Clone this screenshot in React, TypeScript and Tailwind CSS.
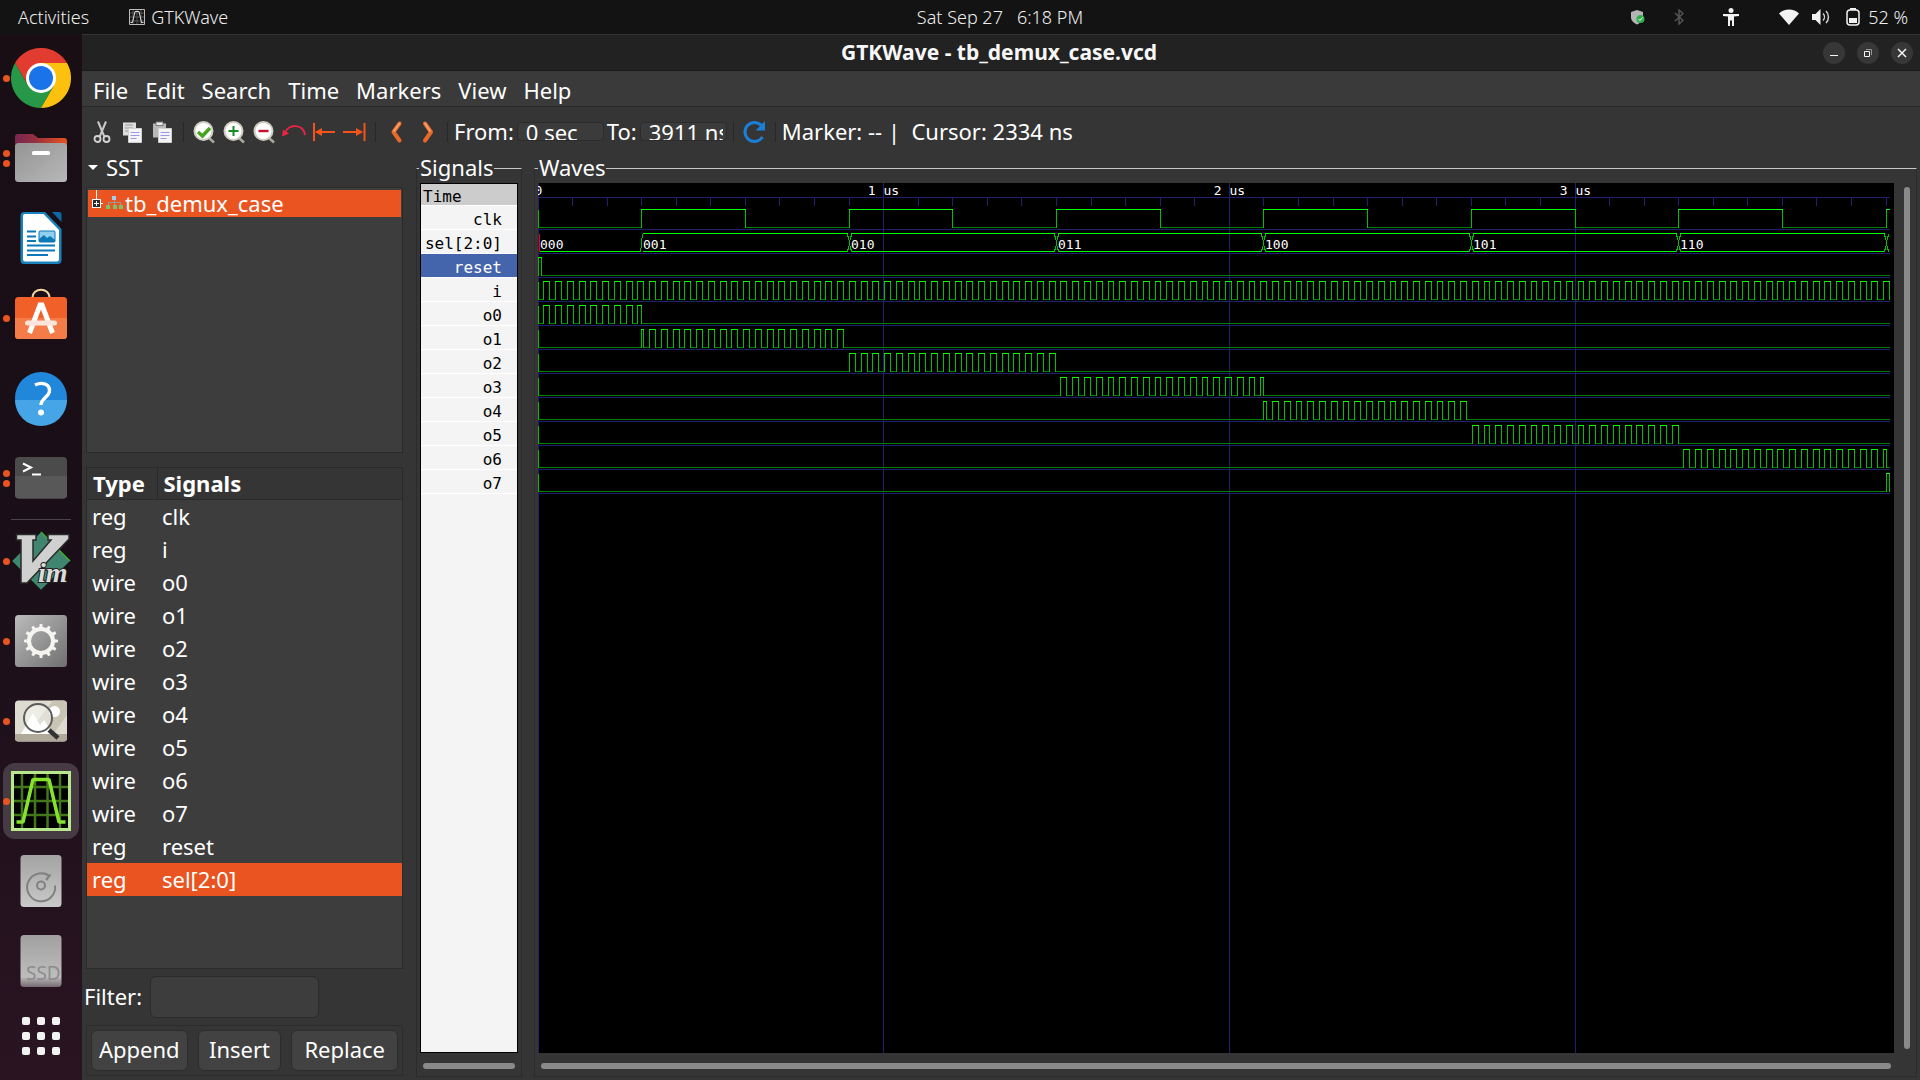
import type { ReactNode } from "react";

/* ---------- simulation data ---------- */

const PX_PER_NS = 0.34567;
const END = 3911;
const ROW = 24;
const xAt = (t: number) => Math.floor(t * PX_PER_NS) + 0.5;

type Pulse = [number, number];

const clk: Pulse[] = [];
for (let t = 300; t < END; t += 600) clk.push([t, Math.min(t + 300, END)]);

const input: Pulse[] = [];
for (let t = 17; t < END; t += 34) input.push([t, Math.min(t + 17, END)]);

const within = (from: number, to: number): Pulse[] =>
  input
    .map(([a, b]): Pulse => [Math.max(a, from), Math.min(b, to)])
    .filter(([a, b]) => b > a);

const bus = [
  { from: 0, to: 300, value: "000" },
  { from: 300, to: 900, value: "001" },
  { from: 900, to: 1500, value: "010" },
  { from: 1500, to: 2100, value: "011" },
  { from: 2100, to: 2700, value: "100" },
  { from: 2700, to: 3300, value: "101" },
  { from: 3300, to: 3900, value: "110" },
  { from: 3900, to: 3911, value: "" },
];

const traces: { name: string; pulses: Pulse[] | null }[] = [
  { name: "clk", pulses: clk },
  { name: "sel[2:0]", pulses: null },
  { name: "reset", pulses: [[0, 10]] },
  { name: "i", pulses: input },
  ...bus.map((b, n) => ({ name: "o" + n, pulses: within(b.from, b.to) })),
];

const variables = [
  ["reg", "clk"],
  ["reg", "i"],
  ["wire", "o0"],
  ["wire", "o1"],
  ["wire", "o2"],
  ["wire", "o3"],
  ["wire", "o4"],
  ["wire", "o5"],
  ["wire", "o6"],
  ["wire", "o7"],
  ["reg", "reset"],
  ["reg", "sel[2:0]"],
];

/* ---------- wave canvas ---------- */

function Trace({ pulses, row }: { pulses: Pulse[]; row: number }) {
  const hi = 26.5 + row * ROW;
  const lo = hi + 18;
  let high = "";
  let low = "";
  let edge = `M0.5 ${hi}V${lo}`;
  let last = 0;
  for (const [a, b] of pulses) {
    const xa = xAt(a);
    const xb = xAt(b);
    if (a > last) low += `M${xAt(last)} ${lo}H${xa}`;
    edge += `M${xa} ${hi}V${lo}`;
    if (b < END) edge += `M${xb} ${hi}V${lo}`;
    high += `M${xa - 0.5} ${hi}H${xb + 0.5}`;
    last = b;
  }
  if (last < END) low += `M${xAt(last)} ${lo}H${xAt(END) + 0.5}`;
  return (
    <g fill="none">
      <path d={low} stroke="#008000" />
      <path d={edge} stroke="#00c000" />
      <path d={high} stroke="#00ff00" />
    </g>
  );
}

function Bus({ row }: { row: number }) {
  const hi = 26.5 + row * ROW;
  const lo = hi + 18;
  return (
    <g fill="none">
      {bus.map((b, n) => {
        const a = xAt(b.from);
        const z = xAt(b.to);
        const start = n === 0 ? a : a + 1.5;
        const end = n === bus.length - 1 ? z - 2 : z - 1.5;
        return (
          <g key={n}>
            <path
              d={`M${start} ${lo}H${end}` + (n ? `M${start} ${hi}H${end}` : "")}
              stroke="#00ff00"
            />
            {n === 1 && <path d={`M${a - 1} ${lo}V${lo - 4}M${a} ${lo - 4}V${hi + 4}M${a + 1} ${hi + 4}V${hi}`} stroke="#00c000" />}
            {n > 1 && (
              <path
                d={`M${a - 2} ${hi}v3M${a - 1} ${hi + 2}v4M${a} ${hi + 6}v6M${a - 1} ${lo - 6}v4M${a - 2} ${lo - 3}v3M${a + 2} ${hi}v3M${a + 1} ${hi + 2}v4M${a + 1} ${lo - 6}v4M${a + 2} ${lo - 3}v3`}
                stroke="#00c000"
              />
            )}
            <text x={Math.floor(a) + 2} y={lo - 3} fill="#fff" fontSize="13">
              {b.value}
            </text>
          </g>
        );
      })}
      <path d={`M1.5 ${hi}V${lo}`} stroke="#ff0000" />
    </g>
  );
}

function WaveCanvas() {
  const ticks = Array.from({ length: 39 }, (_, n) => (n + 1) * 100);
  const width = xAt(END) + 0.5;
  return (
    <svg
      className="h-full w-full bg-black font-['DejaVu_Sans_Mono',monospace]"
      shapeRendering="crispEdges"
      role="img"
      aria-label="Waveforms"
    >
      <g stroke="#20206f">
        <path d={`M0 14.5H${width}` + ticks.map((t) => `M${xAt(t)} 14V23`).join("")} />
        <path d={traces.map((_, n) => `M0 ${46.5 + n * ROW}H${width}`).join("")} />
        {[0, 1000, 2000, 3000].map((t) => (
          <line key={t} x1={xAt(t)} x2={xAt(t)} y1="0" y2="100%" />
        ))}
      </g>
      {["0", "1 us", "2 us", "3 us"].map((label, n) => (
        <text key={label} x={xAt(n * 1000)} y="12" fill="#fff" fontSize="13" textAnchor="middle">
          {label}
        </text>
      ))}
      {traces.map((t, n) =>
        t.pulses ? <Trace key={t.name} pulses={t.pulses} row={n} /> : <Bus key={t.name} row={n} />,
      )}
    </svg>
  );
}

/* ---------- dock ---------- */

function DockIcon({ children }: { children: ReactNode }) {
  return (
    <svg className="size-[60px]" viewBox="-30 -30 60 60">
      {children}
    </svg>
  );
}

const gear = Array.from({ length: 12 }, (_, n) => n * 30);

const dockItems: { name: string; dots: number; active?: boolean; icon: ReactNode }[] = [
  {
    name: "Google Chrome",
    dots: 1,
    icon: (
      <>
        <path d="M-26-15A30 30 0 0 1 26-15H0L-13 7.5Z" fill="#e23b30" />
        <path d="M-26-15A30 30 0 0 0 0 30L13 7.5H-13Z" fill="#279847" />
        <path d="M0-15H26A30 30 0 0 1 0 30L13 7.5Z" fill="#fcc00f" />
        <circle r="15" fill="#fff" />
        <circle r="12" fill="#1a73e8" />
      </>
    ),
  },
  {
    name: "Files",
    dots: 2,
    icon: (
      <>
        <defs>
          <linearGradient id="folder" x1="0" x2="1">
            <stop offset="0" stopColor="#77264f" />
            <stop offset=".4" stopColor="#96303f" />
            <stop offset="1" stopColor="#e95420" />
          </linearGradient>
          <linearGradient id="metal" x1="0" y1="0" x2="1" y2="1">
            <stop offset="0" stopColor="#949494" />
            <stop offset="1" stopColor="#b8b8b8" />
          </linearGradient>
        </defs>
        <path d="M-26-21q0-3 3-3H-8l5 4H23q3 0 3 3V0H-26Z" fill="url(#folder)" />
        <rect x="-26" y="-15" width="52" height="39" rx="3.5" fill="url(#metal)" />
        <rect x="-9" y="-7" width="18" height="4" rx="1.5" fill="#fff" />
      </>
    ),
  },
  {
    name: "LibreOffice Writer",
    dots: 0,
    icon: (
      <>
        <path d="M-17-26H4L20.500-9V22q0 4-4 4H-17q-3.500 0-3.500-4V-22q0-4 3.500-4Z" fill="#1a83bd" />
        <path d="M-16-24H2.500L18-8V21q0 2.500-2.500 2.500H-16q-2 0-2-2V-22q0-2 2-2Z" fill="#fff" />
        <path d="M11-26H18q2.500 0 2.500 2.500V-16Z" fill="#0b6aa5" />
        <path d="M-14-6.500h9M-14-1.500h9M-14 3h9M-14 7.500H14M-14 12.500H14M-14 17H7" stroke="#0b78b8" strokeWidth="2.200" />
        <rect x="-2" y="-7" width="16" height="11" rx="1" fill="#8fd0ef" stroke="#0b78b8" />
        <path d="M-2 4V1L3-3 6 0 9-2 14 2V4Z" fill="#0b78b8" />
      </>
    ),
  },
  {
    name: "Ubuntu Software",
    dots: 1,
    icon: (
      <>
        <path d="M-8.500-20C-8.500-31 8.500-31 8.500-20" fill="none" stroke="#f3d3a4" strokeWidth="2" />
        <rect x="-26" y="-21" width="52" height="42" rx="3.500" fill="#f2602a" />
        <path d="M-26 0H26V17.500q0 3.500-3.500 3.500H-22.500q-3.500 0-3.500-3.500Z" fill="#f47c48" />
        <path d="M-11.500 15L-1-13H1L11.500 15" fill="none" stroke="#fff" strokeWidth="5" />
        <path d="M-13.500 5H13.500" stroke="#fde4da" strokeWidth="5" strokeLinecap="round" />
      </>
    ),
  },
  {
    name: "Help",
    dots: 0,
    icon: (
      <>
        <circle r="26" fill="#2187db" />
        <path d="M-26 2A26 26 0 0 0 26 2Z" fill="#45a5e6" />
        <path d="M-6-13C0-16 8.500-15 8.500-7.500C8.500-1 0 0 0 7" fill="none" stroke="#fff" strokeWidth="3.400" />
        <circle cy="14.500" r="3" fill="#fff" />
      </>
    ),
  },
  {
    name: "Terminal",
    dots: 2,
    icon: (
      <>
        <rect x="-26" y="-21" width="52" height="41.500" rx="4" fill="#4b4b4b" />
        <path d="M-26-2H26V16.500q0 4-4 4H-22q-4 0-4-4Z" fill="#585858" />
        <path d="M-18-14.500l8 4-8 4" fill="none" stroke="#fff" strokeWidth="2" />
        <path d="M-9-3.500H0" stroke="#fff" strokeWidth="2" />
      </>
    ),
  },
  {
    name: "Vim",
    dots: 1,
    icon: (
      <>
        <path d="M0-29L29 0 0 29-29 0Z" fill="#3f8570" stroke="#1d3b2c" />
        <path d="M0-29L29 0" stroke="#3fae2a" strokeWidth="1.500" />
        <path
          d="M-24.500-26.500H-5V-21H-8V0L10-21H7V-26.500H28V-22L-14 22H-20V-21H-24.500Z"
          fill="#d0d0d0"
          stroke="#2a2a2a"
          strokeWidth="1.500"
        />
        <text
          x="-3"
          y="21"
          fill="#dcdcdc"
          stroke="#222"
          strokeWidth="2"
          paintOrder="stroke"
          className="font-['Liberation_Serif',serif] text-[28px] font-bold italic"
        >
          im
        </text>
      </>
    ),
  },
  {
    name: "Settings",
    dots: 1,
    icon: (
      <>
        <defs>
          <linearGradient id="panel" x1="0" y1="0" x2="1" y2="1">
            <stop offset="0" stopColor="#bcbcbc" />
            <stop offset="1" stopColor="#6f6f6f" />
          </linearGradient>
        </defs>
        <rect x="-26" y="-26" width="52" height="52" rx="3.500" fill="url(#panel)" />
        {gear.map((angle) => (
          <path key={angle} d="M-2-12L-1.300-17H1.300L2-12Z" fill="#f5f4f0" transform={`rotate(${angle})`} />
        ))}
        <circle r="12" fill="none" stroke="#f5f4f0" strokeWidth="4" />
      </>
    ),
  },
  {
    name: "Image Viewer",
    dots: 1,
    icon: (
      <>
        <rect x="-26" y="-20.500" width="52" height="41" rx="3.500" fill="#dedcd0" />
        <path d="M12-20.500H22q4 0 4 4V-6L12 13.500H-14Z" fill="#c8c5b4" />
        <path d="M-26 13H26V17q0 3.500-3.500 3.500H-22.500q-3.500 0-3.500-3.500Z" fill="#b0a999" />
        <circle cx="13.500" cy="-9.500" r="5.500" fill="#fff" />
        <path d="M-20 13L-8-8-1 4 3-1 12 13Z" fill="#fff" />
        <circle cx="-3" cy="-3" r="14" fill="#fff" fillOpacity=".45" stroke="#5c5c5c" strokeWidth="2" />
        <path d="M8 9L17 17" stroke="#333" strokeWidth="4.500" />
      </>
    ),
  },
  {
    name: "GTKWave",
    dots: 1,
    active: true,
    icon: (
      <>
        <rect x="-28.500" y="-28.500" width="57" height="57" stroke="#b9e78c" strokeWidth="3" />
        <path d="M-19-27V27M-6-27V27M6.500-27V27M19-27V27M-27-14H27M-27 0H27M-27 14H27" stroke="#44761c" strokeWidth="2.500" />
        <path d="M-24.500 21H-18L-8-21.500H8L18 21H24.500" fill="none" stroke="#86e22f" strokeWidth="3.500" strokeLinejoin="bevel" />
      </>
    ),
  },
  {
    name: "Disk",
    dots: 0,
    icon: (
      <>
        <defs>
          <linearGradient id="disk" x2="0" y2="1">
            <stop offset="0" stopColor="#a3a3a3" />
            <stop offset="1" stopColor="#c9c9c9" />
          </linearGradient>
        </defs>
        <rect x="-20.500" y="-26" width="41" height="52" rx="3.500" fill="url(#disk)" />
        <path d="M9-7.500A14 14 0 1 0 14 1.500M9.500-9.500L5-4" fill="none" stroke="#808080" strokeWidth="2" transform="translate(0 3)" />
        <circle cy="4.500" r="4" fill="none" stroke="#808080" strokeWidth="2" />
      </>
    ),
  },
  {
    name: "SSD",
    dots: 0,
    icon: (
      <>
        <defs>
          <linearGradient id="ssd" x2="0" y2="1">
            <stop offset="0" stopColor="#a0a0a0" />
            <stop offset=".8" stopColor="#bdbdbd" />
            <stop offset="1" stopColor="#766a72" />
          </linearGradient>
        </defs>
        <rect x="-20.500" y="-26" width="41" height="52" rx="3.500" fill="url(#ssd)" />
        <text x="-15" y="19" fill="#8c8c8c" className="font-['Noto_Sans',sans-serif] text-[19px]">
          SSD
        </text>
      </>
    ),
  },
];

function Dock() {
  return (
    <nav className="flex w-[82px] shrink-0 flex-col bg-gradient-to-b from-[#1a0e15] via-[#1a0f18] to-[#2a1422] pt-1">
      {dockItems.map((item, n) => (
        <div key={item.name}>
          {n === 6 && <hr className="mx-[11px] mt-px mb-px border-[#4a434a]" />}
          <button
            type="button"
            aria-label={item.name}
            className="relative flex h-20 w-full items-center justify-center"
          >
            <span
              className={
                item.active
                  ? "flex size-[76px] items-center justify-center rounded-xl bg-[#463b43]"
                  : "flex size-[76px] items-center justify-center"
              }
            >
              <DockIcon>{item.icon}</DockIcon>
            </span>
            <span className="absolute inset-y-0 left-[3px] flex flex-col items-center justify-center gap-[3px]">
              {Array.from({ length: item.dots }, (_, d) => (
                <span key={d} className="size-[7px] rounded-full bg-[#e95420]" />
              ))}
            </span>
          </button>
        </div>
      ))}
      <button type="button" aria-label="Show Applications" className="mx-auto mt-4 grid grid-cols-3 gap-[7px]">
        {gear.slice(0, 9).map((k) => (
          <span key={k} className="size-2 rounded-[2px] bg-[#f2f2f2]" />
        ))}
      </button>
    </nav>
  );
}

/* ---------- system bar ---------- */

function TopBar() {
  return (
    <header className="relative flex h-[34px] shrink-0 items-center bg-[#131313] pr-3 pl-[18px] text-lg font-light text-[#eeeeee]">
      <button type="button">Activities</button>
      <button type="button" className="ml-10 flex items-center gap-1.5">
        <svg className="size-4" viewBox="0 0 16 16" fill="none">
          <path d="M.5.500h15v15H.5Z" stroke="#bbb" />
          <path d="M4 1v14M8 1v14M12 1v14M1 4h14M1 8h14M1 12h14" stroke="#555" />
          <path d="M1.500 13.500H3.500L6 2.500h4L12.500 13.500h2" stroke="#ddd" />
        </svg>
        GTKWave
      </button>
      <button type="button" className="absolute left-1/2 flex -translate-x-1/2 gap-3.5 pl-20 pr-0 whitespace-nowrap">
        <span>Sat Sep 27</span>
        <span>6:18 PM</span>
      </button>
      <div className="ml-auto flex items-center">
        <svg className="mr-[28px] size-4" viewBox="0 0 16 16">
          <path d="M7 1L13 3V8c0 4-3 6-6 7.500C4 14 1 12 1 8V3Z" fill="#b5b5b5" />
          <circle cx="10.500" cy="10" r="4" fill="#2fae4a" />
          <path d="M8.500 10l1.500 1.500 2.500-3" fill="none" stroke="#fff" />
        </svg>
        <svg className="mr-[39px] h-4 w-2.5" viewBox="0 0 10 16" fill="none" stroke="#555" strokeWidth="1.500">
          <path d="M1 4L9 11.500 5 15V1L9 4.500 1 12" />
        </svg>
        <svg className="mr-10 h-[18px] w-4" viewBox="0 0 16 18" fill="#f2f2f2">
          <circle cx="8" cy="2.500" r="2.500" />
          <path d="M0 6H16V8L11 8.500V18H9V12.500H7V18H5V8.500L0 8Z" />
        </svg>
        <svg className="mr-[13px] h-4 w-5" viewBox="0 0 20 16" fill="#f2f2f2">
          <path d="M0 4.500C5-1 15-1 20 4.500L10 16Z" />
        </svg>
        <svg className="mr-4 h-4 w-[18px]" viewBox="0 0 18 16" fill="#f2f2f2">
          <path d="M0 5H3.500L8.500 0V16L3.500 11H0Z" />
          <path d="M11 4.500a5 5 0 0 1 0 7M14 2a8.500 8.500 0 0 1 0 12" fill="none" stroke="#d0d0d0" strokeWidth="1.500" />
        </svg>
        <svg className="mr-2 h-[18px] w-3.5" viewBox="0 0 14 18">
          <rect x="1" y="2" width="12" height="15" rx="3" fill="none" stroke="#f2f2f2" strokeWidth="1.500" />
          <path d="M4 0h6v2H4ZM3 10h8v5H3Z" fill="#f2f2f2" />
        </svg>
        <span>52 %</span>
      </div>
    </header>
  );
}

function WindowButton({ label, children }: { label: string; children: ReactNode }) {
  return (
    <button type="button" aria-label={label} className="flex size-[22px] items-center justify-center rounded-full bg-[#373737]">
      <svg className="size-3" viewBox="0 0 12 12" fill="none" stroke="#f5f5f5">
        {children}
      </svg>
    </button>
  );
}

/* ---------- toolbar ---------- */

function Tool({ label, children }: { label: string; children: ReactNode }) {
  return (
    <button type="button" aria-label={label} className="flex w-[30px] shrink-0 justify-center">
      <svg className="size-6" viewBox="0 0 24 24" fill="none">
        {children}
      </svg>
    </button>
  );
}

const Divider = () => <span className="mr-[5px] ml-1.5 h-5 w-px shrink-0 bg-[#282828]" />;

function Lens({ children }: { children: ReactNode }) {
  return (
    <>
      <path d="M17 18L22 22.500" stroke="#a9a99a" strokeWidth="2.500" />
      <circle cx="11.500" cy="11" r="9" fill="#fff" stroke="#cfcdc2" strokeWidth="2" />
      {children}
    </>
  );
}

const Page = ({ x, y }: { x: number; y: number }) => (
  <path d={`M${x} ${y}h13v14h-13Z`} fill="#f4f4f4" stroke="#d0d0d0" />
);

function Toolbar() {
  return (
    <div className="flex h-[49px] items-center pl-[5px]">
      <Tool label="Cut">
        <path d="M8 1.500L14.500 17M16 1.500L9.500 17" stroke="#c9c9c9" strokeWidth="2" />
        <circle cx="7.500" cy="19" r="3" stroke="#d4d4d4" strokeWidth="1.800" />
        <circle cx="16.500" cy="19" r="3" stroke="#d4d4d4" strokeWidth="1.800" />
      </Tool>
      <Tool label="Copy">
        <path d="M3 2.500h13v13H3Z" fill="#dedede" />
        <path d="M5 5h8M5 8h8M5 11h3" stroke="#999" />
        <Page x={8.500} y={8.500} />
        <path d="M10.500 12.500h9M10.500 15.500h9M10.500 18.500h6" stroke="#9b97e8" />
      </Tool>
      <Tool label="Paste">
        <path d="M3 3.500h13v14H3Z" fill="#b8b8b8" />
        <path d="M6 2h7v3.500H6Z" fill="#efefef" stroke="#777" />
        <Page x={8.500} y={8.500} />
        <path d="M10.500 12.500h9M10.500 15.500h9M10.500 18.500h6" stroke="#9b97e8" />
      </Tool>
      <Divider />
      <Tool label="Zoom Fit">
        <Lens>
          <path d="M6 12L10.500 16 18 8" stroke="#45a51f" strokeWidth="3.500" />
        </Lens>
      </Tool>
      <Tool label="Zoom In">
        <Lens>
          <path d="M11.500 6v10M6.500 11h10" stroke="#188a26" strokeWidth="2" />
        </Lens>
      </Tool>
      <Tool label="Zoom Out">
        <Lens>
          <path d="M6.500 11h10" stroke="#c8102e" strokeWidth="2.400" />
        </Lens>
      </Tool>
      <Tool label="Zoom Undo">
        <path d="M3 13C6 4 21 3 23 15" stroke="#ee2244" strokeWidth="2" />
        <path d="M0 16.500L1 9.500 7 13.500Z" fill="#ee2244" />
      </Tool>
      <Tool label="Zoom to Start">
        <path d="M2 3v18M4 12h19" stroke="#f4541a" strokeWidth="2" />
        <path d="M3 12L10 8v8Z" fill="#f4541a" />
      </Tool>
      <Tool label="Zoom to End">
        <path d="M22.500 3v18M1 12h19" stroke="#f4541a" strokeWidth="2" />
        <path d="M21 12L14 8v8Z" fill="#f4541a" />
      </Tool>
      <Divider />
      <Tool label="Find Previous Edge">
        <path d="M15.500 3.500L9.500 12 15.500 20.500" stroke="#e9692b" strokeWidth="4" strokeLinecap="round" strokeLinejoin="round" />
        <path d="M15.500 3.500L10 11" stroke="#f3a069" strokeWidth="2" strokeLinecap="round" />
      </Tool>
      <Tool label="Find Next Edge">
        <path d="M11 3.500L17 12 11 20.500" stroke="#e9692b" strokeWidth="4" strokeLinecap="round" strokeLinejoin="round" />
        <path d="M11 3.500L16 11" stroke="#f3a069" strokeWidth="2" strokeLinecap="round" />
      </Tool>
      <Divider />
      <label htmlFor="from" className="ml-px">
        From:
      </label>
      <input
        id="from"
        defaultValue="0 sec"
        className="ml-[3px] h-[19px] w-[87px] rounded border border-[#2c2c2c] bg-[#3b3b3b] pr-1 pl-2 leading-[17px] outline-none"
      />
      <label htmlFor="to" className="ml-[3px]">
        To:
      </label>
      <input
        id="to"
        defaultValue="3911 ns"
        className="ml-[3px] h-[19px] w-[87px] rounded border border-[#2c2c2c] bg-[#3b3b3b] pr-[3px] pl-2 leading-[17px] outline-none"
      />
      <Divider />
      <Tool label="Reload">
        <path d="M19.500 5.500A9.500 9.500 0 1 0 20.500 17" stroke="#1c7fd6" strokeWidth="3" />
        <path d="M23 1V10.500H13.500Z" fill="#1c7fd6" />
      </Tool>
      <Divider />
      <span className="ml-px whitespace-pre">Marker: -- |&nbsp; Cursor: 2334 ns</span>
    </div>
  );
}

/* ---------- left panel ---------- */

const actions = [
  { label: "Append", className: "px-[7px]" },
  { label: "Insert", className: "px-2.5" },
  { label: "Replace", className: "px-3" },
];

function SidePanel() {
  return (
    <aside className="flex w-[321px] shrink-0 flex-col">
      <button type="button" className="flex h-6 items-center gap-2 pb-0.5 pl-1.5 leading-[22px]">
        <svg className="h-[5px] w-2.5" viewBox="0 0 10 5" fill="#fff">
          <path d="M0 0H10L5 5Z" />
        </svg>
        SST
      </button>
      <div className="mt-[7px] ml-1 h-[266px] border border-[#2a2a2a] bg-[#3d3d3d] p-px pt-0.5">
        <div className="flex h-[27px] items-center bg-[#e95420] pl-1 leading-[27px] text-white">
          <svg className="h-[27px] w-[33px]" viewBox="0 0 33 27" shapeRendering="crispEdges">
            <path d="M4.500 0V9" stroke="#fff" />
            <path d="M0 9h9v9H0Z" fill="#fff" />
            <path d="M1 10h7v7H1Z" fill="#2b2b2b" />
            <path d="M4.500 11v5M2 13.500h5M9 13.500h2" stroke="#fff" />
            <path d="M22.500 10v5M16.500 15V12.500H28.500V15" stroke="#999" fill="none" />
            <path d="M20 6h4v4h-4Z" fill="#a9cbee" />
            <path d="M14 15h4v4h-4ZM21 15h4v4h-4ZM27 15h4v4h-4Z" fill="#7cc26e" />
          </svg>
          tb_demux_case
        </div>
      </div>
      <div className="mt-[14px] ml-1 min-h-0 flex-1 border border-[#2a2a2a] bg-[#3d3d3d]">
        <table className="w-full table-fixed border-collapse text-left">
          <thead>
            <tr className="h-[31px] border-b border-[#2a2a2a] bg-[#353535] text-[22px] leading-[31px]">
              <th className="w-[70px] border-r border-[#2a2a2a] pl-1.5 font-bold">Type</th>
              <th className="pl-1.5 font-bold">Signals</th>
            </tr>
          </thead>
          <tbody>
            {variables.map(([type, name]) => (
              <tr key={name} className={name === "sel[2:0]" ? "h-[33px] bg-[#e95420] leading-[33px]" : "h-[33px] leading-[33px]"}>
                <td className="pl-[5px]">{type}</td>
                <td className="pl-[5px]">{name}</td>
              </tr>
            ))}
          </tbody>
        </table>
      </div>
      <div className="mt-[7px] mb-px flex items-center pl-0.5">
        <label htmlFor="filter" className="pb-0.5">
          Filter:
        </label>
        <input id="filter" className="ml-2 h-[42px] w-[169px] rounded-md border border-[#2a2a2a] bg-[#3d3d3d] px-2 outline-none" />
      </div>
      <div className="mt-[6px] mb-px ml-1 flex justify-between border border-[#2c2c2c] px-1 py-1">
        {actions.map(({ label, className }) => (
          <button key={label} type="button" className={className + " h-[41px] rounded-md border border-[#2c2c2c] bg-[#424242] pb-0.5 leading-[37px]"}>
            {label}
          </button>
        ))}
      </div>
    </aside>
  );
}

/* ---------- application ---------- */

export default function App() {
  return (
    <div className="flex h-screen flex-col overflow-hidden bg-[#353535] font-['Noto_Sans','Open_Sans',sans-serif] text-[22px] text-white">
      <TopBar />
      <div className="flex min-h-0 flex-1">
        <Dock />
        <main className="flex min-w-0 flex-1 flex-col">
          <div className="relative flex h-[37px] shrink-0 items-center justify-center border-t border-b border-t-[#333] border-b-[#181818] bg-[#222222]">
            <h1 className="mr-1 pb-0.5 text-[21px] leading-8 font-bold text-[#f7f7f7]">GTKWave - tb_demux_case.vcd</h1>
            <div className="absolute right-[7px] flex gap-3">
              <WindowButton label="Minimize">
                <path d="M2 8.500h8" />
              </WindowButton>
              <WindowButton label="Restore">
                <path d="M4 2.500H9.500V8" stroke="#999" />
                <path d="M2.500 4.500h5v5h-5Z" />
              </WindowButton>
              <WindowButton label="Close">
                <path d="M2 2l8 8M10 2l-8 8" strokeWidth="1.500" />
              </WindowButton>
            </div>
          </div>
          <nav className="flex h-9 shrink-0 items-center gap-[17px] border-b border-[#282828] bg-[#3a3a3a] pt-0.5 pl-[11px]">
            {["File", "Edit", "Search", "Time", "Markers", "View", "Help"].map((label) => (
              <button key={label} type="button" className="leading-8">
                {label}
              </button>
            ))}
          </nav>
          <Toolbar />
          <div className="flex min-h-0 flex-1 pr-[3px] pb-[3px]">
            <SidePanel />
            <fieldset className="ml-[13px] flex w-[106px] min-w-0 shrink-0 flex-col border border-[#2b2b2b] border-t-[#c8c8c8] px-[3px] pt-[3px] pb-[7px]">
              <legend className="-mx-px h-6 px-px leading-[22px]">Signals</legend>
              <div className="min-h-0 flex-1 border border-black bg-[#f4f4f4] font-['DejaVu_Sans_Mono',monospace] text-base text-black">
                <div className="h-[22px] border-b border-white bg-[#cccccc] pl-0.5 leading-[26px]">Time</div>
                <ul>
                  {traces.map((t) => (
                    <li
                      key={t.name}
                      className={
                        t.name === "reset"
                          ? "h-6 border-b border-white bg-[#4464ac] pr-[15px] text-right leading-7 text-white"
                          : "h-6 border-b border-white pr-[15px] text-right leading-7"
                      }
                    >
                      {t.name}
                    </li>
                  ))}
                </ul>
              </div>
              <div className="mx-[3px] mt-2.5 h-1.5 rounded-full bg-[#8a8a8a]" />
            </fieldset>
            <fieldset className="ml-3 flex min-w-0 flex-1 flex-col border border-[#2b2b2b] border-t-[#c8c8c8] pt-[3px] pr-1.5 pb-[7px] pl-[3px]">
              <legend className="h-6 px-px leading-[22px]">Waves</legend>
              <div className="flex min-h-0 flex-1">
                <div className="min-w-0 flex-1">
                  <WaveCanvas />
                </div>
                <div className="my-1 ml-2.5 w-1.5 rounded-full bg-[#8a8a8a]" />
              </div>
              <div className="mt-2.5 mr-[19px] ml-[3px] h-1.5 rounded-full bg-[#8a8a8a]" />
            </fieldset>
          </div>
        </main>
      </div>
    </div>
  );
}
